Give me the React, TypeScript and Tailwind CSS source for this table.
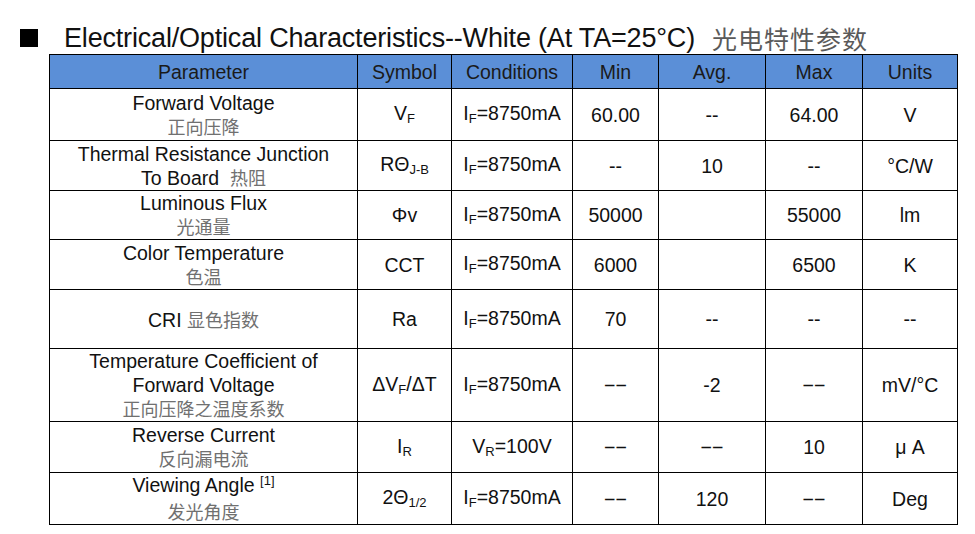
import React from "react";

const F = { fontFamily: '"Liberation Sans", Arial, "Noto Sans CJK SC", sans-serif' };

function Cn({ children }: { children: React.ReactNode }) {
  return (
    <span className="text-[#707070] text-[18px]" style={{ fontFamily: '"Noto Sans CJK SC", sans-serif' }}>
      {children}
    </span>
  );
}

function Sub({ children }: { children: React.ReactNode }) {
  return <span className="text-[13px] relative top-[3px]">{children}</span>;
}

type Row = {
  h: string;
  param: React.ReactNode;
  sym: React.ReactNode;
  cond: React.ReactNode;
  min: string;
  avg: string;
  max: string;
  unit: string;
};

const IF = (
  <>
    I<Sub>F</Sub>=8750mA
  </>
);

const rows: Row[] = [
  {
    h: "h-[52px]",
    param: (
      <>
        <div>Forward Voltage</div>
        <div className="leading-[23px]"><Cn>正向压降</Cn></div>
      </>
    ),
    sym: (<>V<Sub>F</Sub></>),
    cond: IF,
    min: "60.00",
    avg: "--",
    max: "64.00",
    unit: "V",
  },
  {
    h: "h-[50px]",
    param: (
      <>
        <div>Thermal Resistance Junction</div>
        <div className="leading-[23px]">To Board&nbsp; <Cn>热阻</Cn></div>
      </>
    ),
    sym: (<>RΘ<Sub>J-B</Sub></>),
    cond: IF,
    min: "--",
    avg: "10",
    max: "--",
    unit: "°C/W",
  },
  {
    h: "h-[49px]",
    param: (
      <>
        <div>Luminous Flux</div>
        <div className="leading-[23px]"><Cn>光通量</Cn></div>
      </>
    ),
    sym: "Φv",
    cond: IF,
    min: "50000",
    avg: "",
    max: "55000",
    unit: "lm",
  },
  {
    h: "h-[50px]",
    param: (
      <>
        <div>Color Temperature</div>
        <div className="leading-[23px]"><Cn>色温</Cn></div>
      </>
    ),
    sym: "CCT",
    cond: IF,
    min: "6000",
    avg: "",
    max: "6500",
    unit: "K",
  },
  {
    h: "h-[59px]",
    param: (
      <div>
        CRI <Cn>显色指数</Cn>
      </div>
    ),
    sym: "Ra",
    cond: IF,
    min: "70",
    avg: "--",
    max: "--",
    unit: "--",
  },
  {
    h: "h-[73px]",
    param: (
      <>
        <div>Temperature Coefficient of</div>
        <div>Forward Voltage</div>
        <div className="leading-[23px]"><Cn>正向压降之温度系数</Cn></div>
      </>
    ),
    sym: (<>ΔV<Sub>F</Sub>/ΔT</>),
    cond: IF,
    min: "−−",
    avg: "-2",
    max: "−−",
    unit: "mV/°C",
  },
  {
    h: "h-[51px]",
    param: (
      <>
        <div>Reverse Current</div>
        <div className="leading-[23px]"><Cn>反向漏电流</Cn></div>
      </>
    ),
    sym: (<>I<Sub>R</Sub></>),
    cond: (<>V<Sub>R</Sub>=100V</>),
    min: "−−",
    avg: "−−",
    max: "10",
    unit: "μ A",
  },
  {
    h: "h-[50px]",
    param: (
      <>
        <div>
          Viewing Angle <span className="text-[13px] relative -top-[7px]">[1]</span>
        </div>
        <div className="leading-[23px]"><Cn>发光角度</Cn></div>
      </>
    ),
    sym: (<>2Θ<Sub>1/2</Sub></>),
    cond: IF,
    min: "−−",
    avg: "120",
    max: "−−",
    unit: "Deg",
  },
];

export default function App() {
  return (
    <div className="w-[975px] h-[534px] bg-white text-[#111]" style={F}>
      <div className="flex items-center pt-[21px] h-[54px]">
        <div className="ml-[20px] w-[18px] h-[18px] bg-black" />
        <div className="ml-[26px] text-[27px] leading-[30px] tracking-[-0.18px]">
          Electrical/Optical Characteristics--White (At TA=25°C)
        </div>
        <div
          className="ml-[17px] text-[25px] leading-[30px] text-[#5a5a5a] tracking-[1px]"
          style={{ fontFamily: '"Noto Sans CJK SC", sans-serif' }}
        >
          光电特性参数
        </div>
      </div>
      <table className="ml-[49px] table-fixed border-collapse text-[19.5px] leading-[24px]" style={{ width: 908 }}>
        <colgroup>
          <col className="w-[308px]" />
          <col className="w-[94px]" />
          <col className="w-[121px]" />
          <col className="w-[86px]" />
          <col className="w-[107px]" />
          <col className="w-[97px]" />
          <col className="w-[95px]" />
        </colgroup>
        <thead>
          <tr className="h-[34px] bg-[#5b8fd7] text-[#1a1a1a]">
            {["Parameter", "Symbol", "Conditions", "Min", "Avg.", "Max", "Units"].map((t) => (
              <th key={t} className="border border-black font-normal text-center p-0">
                {t}
              </th>
            ))}
          </tr>
        </thead>
        <tbody>
          {rows.map((r, i) => (
            <tr key={i} className={r.h}>
              <td className="border border-black text-center p-0 align-middle">{r.param}</td>
              <td className="border border-black text-center p-0 align-middle">{r.sym}</td>
              <td className="border border-black text-center p-0 align-middle whitespace-nowrap">{r.cond}</td>
              <td className="border border-black text-center p-0 align-middle">{r.min}</td>
              <td className="border border-black text-center p-0 align-middle">{r.avg}</td>
              <td className="border border-black text-center p-0 align-middle">{r.max}</td>
              <td className="border border-black text-center p-0 align-middle">{r.unit}</td>
            </tr>
          ))}
        </tbody>
      </table>
    </div>
  );
}
